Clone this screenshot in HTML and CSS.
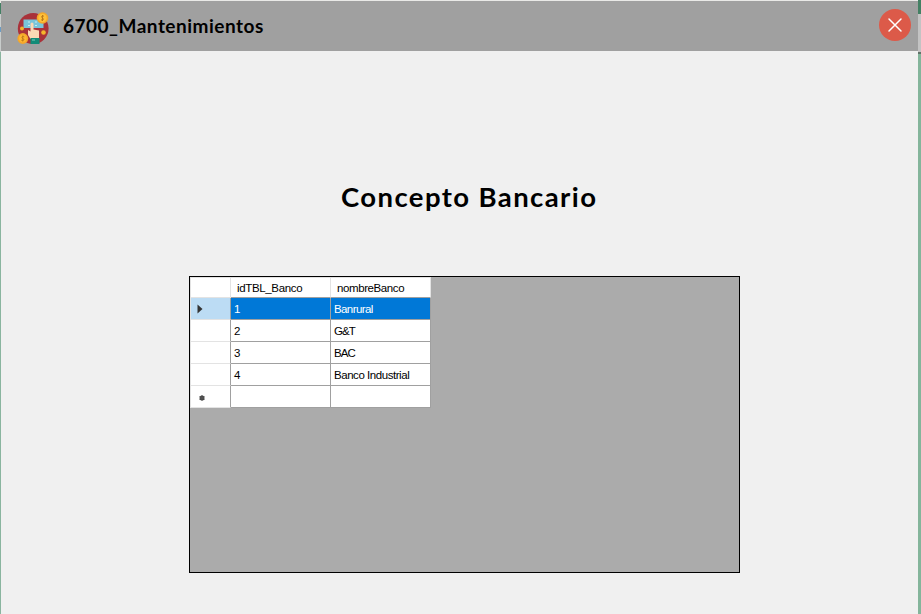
FILE: index.html
```html
<!DOCTYPE html>
<html lang="es">
<head>
<meta charset="utf-8">
<title>6700_Mantenimientos</title>
<link rel="stylesheet" href="styles.css">
</head>
<body>
<div class="window">
  <header class="titlebar">
    <svg class="logo" width="34" height="34" viewBox="0 0 34 34">
      <circle cx="16.2" cy="18.500" r="15.400" fill="#a9323a"/>
      <rect x="6.500" y="9.500" width="20" height="8.500" fill="#79c5d9"/>
      <path d="M11 12h2M18 12h2M11 15.500h2M18 15.500h2" stroke="#c5eef3" stroke-width="1.200"/>
      <path d="M13.500 29l-2.500-4v-5l2.500 1.500V14a1.500 1.500 0 0 1 3 0v5.500l5.500 1V29z" fill="#fbd9b5"/>
      <rect x="13.500" y="28" width="9" height="6" fill="#128b78"/>
      <path d="M15 30h3" stroke="#7ccbb9"/>
      <circle cx="5" cy="18.500" r="2" fill="#f5b52c"/>
      <circle cx="26.500" cy="22.500" r="2.300" fill="#f5b52c"/>
      <circle cx="25.500" cy="8" r="5.800" fill="#f4a72a"/><circle cx="25.500" cy="8" r="4.200" fill="#ffc13a"/>
      <path d="M27 6.300c-2-1.300-3.500.8-1.500 1.700s.7 2.900-1.500 1.700M25.500 5v6" fill="none" stroke="#b87619" stroke-width=".9"/>
      <circle cx="5.800" cy="28.500" r="5.400" fill="#f4a72a"/><circle cx="5.800" cy="28.500" r="3.800" fill="#ffb632"/>
      <path d="M7.300 26.800c-2-1.300-3.500.8-1.500 1.700s.7 2.900-1.500 1.700M5.800 25.500v6" fill="none" stroke="#b87619" stroke-width=".9"/>
    </svg>
    <h1 class="app-name">6700_Mantenimientos</h1>
    <button class="close" aria-label="Cerrar">
      <svg width="32" height="32" viewBox="0 0 32 32">
        <circle cx="16" cy="16" r="16" fill="#dc5a49"/>
        <path d="M10 10l12 12M22 10L10 22" stroke="#fff" stroke-width="1.500" stroke-linecap="round"/>
      </svg>
    </button>
  </header>
  <main class="content">
    <h2 class="heading">Concepto Bancario</h2>
    <div class="grid-panel">
      <div class="grid">
        <div class="row head"><div class="mark"></div><div class="cell"><span class="t-id">idTBL_Banco</span></div><div class="cell"><span class="t-name">nombreBanco</span></div></div>
        <div class="row selected"><div class="mark"><svg width="6" height="10" viewBox="0 0 6 10"><path d="M.5 .5L5.500 5L.5 9.500z" fill="#333"/></svg></div><div class="cell">1</div><div class="cell"><span class="t-rural">Banrural</span></div></div>
        <div class="row"><div class="mark"></div><div class="cell">2</div><div class="cell"><span class="t-gt">G&amp;T</span></div></div>
        <div class="row"><div class="mark"></div><div class="cell">3</div><div class="cell"><span class="t-bac">BAC</span></div></div>
        <div class="row"><div class="mark"></div><div class="cell">4</div><div class="cell"><span class="t-ind">Banco Industrial</span></div></div>
        <div class="row"><div class="mark new"><svg width="6" height="6" viewBox="0 0 6 6"><circle cx="3" cy="3" r="2.500" fill="#444"/><path d="M3 0v6M.4 1.500l5.200 3M.4 4.500l5.200-3" stroke="#555" stroke-width=".8"/></svg></div><div class="cell"></div><div class="cell"></div></div>
      </div>
    </div>
  </main>
</div>
<aside class="edge"></aside>
</body>
</html>
```
FILE: styles.css
```css
* { box-sizing: border-box; }
body {
  margin: 0;
  width: 921px;
  height: 614px;
  overflow: hidden;
  display: flex;
  background: linear-gradient(#e9e9e4 3px, #438063 3px 14px, #c8cccb 14px 27px, #6c9cc4 27px 32px, #c8cccb 32px 52px, #8ab59f 52px);
}
.window {
  width: 917px;
  margin-left: 1px;
  background: #f0f0f0;
}
.titlebar {
  height: 51px;
  display: flex;
  align-items: flex-start;
  padding: 9px 7px 0 16px;
  background: #a0a0a0;
  border-top: 1px solid #e9e9e7;
}
.app-name, .heading {
  margin: 0;
  color: #000;
  font-family: Lato, sans-serif;
  font-weight: 700;
  white-space: nowrap;
}
.app-name {
  flex: 1;
  margin: 5px 0 0 12px;
  font-size: 19px;
  line-height: 22px;
  letter-spacing: 0.5px;
}
.close {
  width: 32px;
  height: 32px;
  margin-top: -1px;
  padding: 0;
  border: 0;
  background: none;
}
.close svg { display: block; }
.content { padding: 129px 0 0 188px; }
.heading {
  padding-left: 152px;
  font-size: 27.5px;
  line-height: 34px;
  letter-spacing: 1.4px;
}
.grid-panel {
  width: 551px;
  height: 297px;
  margin-top: 62px;
  border: 1px solid #000;
  background: #ababab;
}
.grid {
  width: 241px;
  padding: 1px 0 0 1px;
  background: #e3e3e3;
  color: #000;
  font: 11.5px/22px "Liberation Sans", Arial, sans-serif;
}
.row {
  display: grid;
  grid-template-columns: 40px 100px 100px;
  grid-template-rows: 100%;
  height: 22px;
}
.cell {
  padding-left: 3px;
  background: #fff;
  border-right: 1px solid #a0a0a0;
  border-bottom: 1px solid #a0a0a0;
  white-space: nowrap;
}
.mark {
  display: flex;
  align-items: center;
  padding-left: 6px;
  background: #fff;
  border-right: 1px solid #a0a0a0;
  border-bottom: 1px solid #e3e3e3;
}
.new { padding: 3px 0 0 8px; }
.head { height: 20px; line-height: 20px; }
.head .cell { padding-left: 6px; border-right-color: #e3e3e3; }
.head .mark { border-right-color: #e3e3e3; }
.selected .cell { background: #0078d7; color: #fff; }
.selected .mark { background: #bcdcf4; }
.t-id { letter-spacing: -0.35px; }
.t-name { letter-spacing: -0.4px; }
.t-rural { letter-spacing: -0.6px; }
.t-gt { letter-spacing: -0.9px; }
.t-bac { letter-spacing: -0.9px; }
.t-ind { letter-spacing: -0.45px; }
.edge {
  width: 3px;
  background: linear-gradient(#438063 14px, #c3c3c3 14px 52px, #617269 52px 54px, #84b59b 54px);
}
```
